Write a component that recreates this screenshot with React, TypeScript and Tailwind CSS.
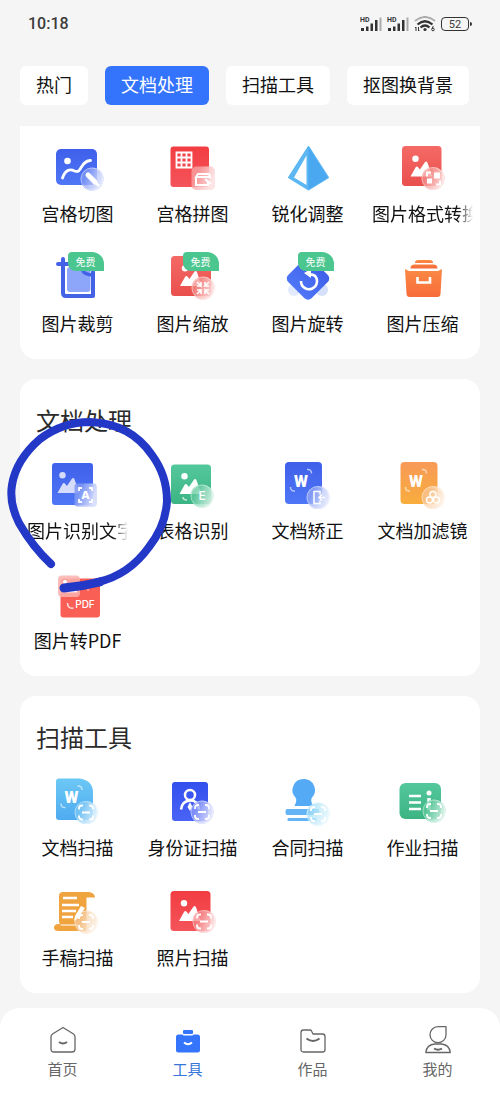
import { useState } from "react";
import type { ReactNode } from "react";
import clsx from "clsx";

type Tool = { name: string; icon: ReactNode; free?: boolean; long?: boolean };

const tabs = ["热门", "文档处理", "扫描工具", "抠图换背景"];

const gradients: [string, string, string][] = [
  ["blue", "#3f60ea", "#4f76f6"],
  ["indigo", "#3350ee", "#4a63f6"],
  ["red", "#f23d42", "#f4545a"],
  ["coral", "#f56a66", "#e94f4d"],
  ["sky", "#6cc8f5", "#4fabf0"],
  ["green", "#54c89d", "#3cb482"],
  ["amber", "#f79a58", "#f9ad3c"],
  ["orange", "#fb8a45", "#f76c3a"],
];

function Gradients() {
  return (
    <svg className="absolute h-0 w-0" aria-hidden="true">
      <defs>
        {gradients.map(([id, from, to]) => (
          <linearGradient key={id} id={id} x1="0" y1="0" x2="0" y2="1">
            <stop offset="0" stopColor={from} />
            <stop offset="1" stopColor={to} />
          </linearGradient>
        ))}
        <linearGradient id="sheen" x1="0" y1="0" x2="1" y2="0.4">
          <stop offset="0.3" stopColor="#fff" stopOpacity="0" />
          <stop offset="1" stopColor="#fff" stopOpacity="0.65" />
        </linearGradient>
      </defs>
    </svg>
  );
}

function Art({ children }: { children: ReactNode }) {
  return (
    <svg viewBox="0 0 56 56" className="size-14" fill="none" aria-hidden="true">
      {children}
    </svg>
  );
}

// frosted round badge in the lower right corner of most icons
function Glass({ x, y, tint, children }: { x: number; y: number; tint: string; children?: ReactNode }) {
  return (
    <g transform={`translate(${x} ${y})`}>
      <circle r="11.5" fill={tint} fillOpacity="0.75" />
      <circle r="11.5" fill="url(#sheen)" />
      <circle r="11" stroke="#fff" strokeOpacity="0.4" />
      {children}
    </g>
  );
}

function ScanMark() {
  return (
    <path
      d="M-7-3v-1q0-3 3-3h1M3-7h1q3 0 3 3v1M7 3v1q0 3-3 3h-1M-3 7h-1q-3 0-3-3v-1M-4 0h8"
      stroke="#fff"
      strokeWidth="1.8"
    />
  );
}

function Mountains({ x, y, fill = "#fff" }: { x: number; y: number; fill?: string }) {
  return (
    <g transform={`translate(${x} ${y})`} fill={fill}>
      <circle cx="5.5" cy="3.2" r="3.2" />
      <path d="M.5 21 5.5 12q1.2-2 2.6-.3l1.8 2.3 5-7.2q1.2-1.6 2.4 0L22 20q.3 1-.7 1z" />
    </g>
  );
}

function WordMark({ x, y }: { x: number; y: number }) {
  return (
    <g transform={`translate(${x} ${y})`}>
      <text
        textAnchor="middle"
        y="6"
        fontSize="16"
        fontWeight="900"
        fill="#fff"
        fontFamily="Roboto, sans-serif"
      >
        W
      </text>
      <path d="M6-11q4.500-.5 4.500 4M-10.500 6.500q0 4.500 4.500 4" stroke="#fff" strokeOpacity="0.6" strokeWidth="1.5" />
    </g>
  );
}

const slice = (
  <Art>
    <rect x="6" y="7" width="41" height="36" rx="5" fill="url(#blue)" />
    <circle cx="17.5" cy="19" r="3.3" fill="#fff" />
    <path d="M12.500 36c3-9 8-9 12-7 8 3 5-10 16-10.500" stroke="#fff" strokeWidth="2.8" strokeLinecap="round" />
    <Glass x={42} y={37} tint="#8098f5">
      <path d="M-4-4l7 7" stroke="#fff" strokeWidth="5" strokeLinecap="round" />
      <path d="M3 3l4 4" stroke="#fff" strokeWidth="2.5" />
    </Glass>
  </Art>
);

const collage = (
  <Art>
    <rect x="5.500" y="4.500" width="38.500" height="40.500" rx="3" fill="url(#red)" />
    <path
      d="M11.500 10.500h15v15h-15zM16.500 10.500v15M21.500 10.500v15M11.500 15.500h15M11.500 20.500h15"
      stroke="#fff"
      strokeWidth="1.8"
    />
    <rect x="26.500" y="24.500" width="23.500" height="23.500" rx="5" fill="#f8a3a5" fillOpacity="0.8" />
    <rect x="26.500" y="24.500" width="23.500" height="23.500" rx="5" fill="url(#sheen)" />
    <path d="M31 35v8h12v-3M31 35l2-3h11l1 3zM40 37l6 5" stroke="#fff" strokeWidth="2" />
  </Art>
);

const sharpen = (
  <Art>
    <path
      d="M28.500 5 48 35.500 28.500 47.500 9 35.500z"
      fill="#5db7f2"
      stroke="#5db7f2"
      strokeWidth="2"
      strokeLinejoin="round"
    />
    <path d="M28.500 5 48 35.500 28.500 47.500z" fill="#4aa8f0" />
    <path d="M26.500 13.500v29.500l-12.500-7.500z" fill="#fff" />
  </Art>
);

const convert = (
  <Art>
    <rect x="7" y="4" width="39.500" height="40" rx="3.5" fill="url(#coral)" />
    <Mountains x={15} y={13.5} />
    <Glass x={38} y={36.5} tint="#f48d8b">
      <path d="M1-6h6v6h-6zM-6 0h5v5h-5z" fill="#fff" />
      <path d="M-6-2v-4h4M7 2v4h-4" stroke="#fff" strokeWidth="2" />
    </Glass>
  </Art>
);

const crop = (
  <Art>
    <rect x="17" y="15" width="23.500" height="25" rx="3" fill="#8ea6fa" />
    <path
      d="M13 7v34q0 3 3 3h27v-24M8 12h11"
      stroke="#4362e6"
      strokeWidth="4"
      strokeLinecap="round"
      strokeLinejoin="round"
    />
    <path d="M32 17q2 6 11 6" stroke="#4362e6" strokeWidth="3.5" strokeLinecap="round" />
  </Art>
);

const scale = (
  <Art>
    <rect x="6" y="4" width="40" height="40" rx="3.5" fill="url(#coral)" />
    <Mountains x={14.5} y={13} />
    <Glass x={38} y={36} tint="#f48d8b">
      <path
        d="M-6-6l4 4v-4M6-6l-4 4h4M-6 6l4-4h-4M6 6l-4-4v4M-2-2h-4M2-2v-4M-2 2v4M2 2h4"
        stroke="#fff"
        strokeWidth="1.6"
      />
    </Glass>
  </Art>
);

const rotate = (
  <Art>
    <circle cx="14" cy="38" r="6" fill="#e3eafe" />
    <circle cx="42" cy="38" r="6" fill="#d5e0fd" />
    <rect x="11.500" y="10" width="33" height="33" rx="5" transform="rotate(45 28 26.500)" fill="url(#blue)" />
    <path d="M34 23a8 8 0 1 1-13 6" stroke="#fff" strokeWidth="2.6" />
    <path d="M29 23q3-1 5.500.5" stroke="#fff" strokeWidth="2.6" />
    <path d="M31 17l-7 4 7 5z" fill="#fff" />
  </Art>
);

const compress = (
  <Art>
    <path d="M20 11q0-3 3-3h12q3 0 3 3zM15.500 16.500q0-4 4-4h19q4 0 4 4z" fill="url(#orange)" />
    <path d="M10 17l4 2h29l4-2-1.500 25q-.3 3-3 3h-28q-2.700 0-3-3z" fill="url(#orange)" />
    <path d="M22.500 25v5.500h12.500v-5.500" stroke="#fff" strokeWidth="2.6" />
  </Art>
);

const imageText = (
  <Art>
    <rect x="2" y="4" width="41" height="42" rx="3" fill="url(#blue)" />
    <Mountains x={7} y={13} fill="#d5dcfb" />
    <rect x="24.500" y="24.500" width="22" height="23" rx="3" fill="#8098f5" fillOpacity="0.85" />
    <rect x="24.500" y="24.500" width="22" height="23" rx="3" fill="url(#sheen)" />
    <path d="M32 29h-3v3M39 29h3v3M32 43h-3v-3M39 43h3v-3" stroke="#fff" strokeWidth="1.8" />
    <text
      x="35.500"
      y="40"
      textAnchor="middle"
      fontSize="11"
      fontWeight="800"
      fill="#fff"
      fontFamily="Inter, sans-serif"
    >
      A
    </text>
  </Art>
);

const tableText = (
  <Art>
    <rect x="6" y="5.500" width="40" height="39.500" rx="3.5" fill="url(#green)" />
    <Mountains x={14} y={14} />
    <path d="M18 38q0 3 4 3" stroke="#fff" strokeOpacity="0.7" strokeWidth="1.5" />
    <Glass x={37} y={37} tint="#62c99f">
      <text y="4" textAnchor="middle" fontSize="12" fontWeight="500" fill="#fff" fontFamily="Inter, sans-serif">
        E
      </text>
    </Glass>
  </Art>
);

const straighten = (
  <Art>
    <rect x="5" y="3" width="37" height="42" rx="4" fill="url(#blue)" />
    <WordMark x={21} y={21.5} />
    <Glass x={38} y={38.5} tint="#93a8f6">
      <path d="M2-3v-3h-6v12h6v-3M7 0h-6M4-3l-3 3 3 3" stroke="#fff" strokeWidth="1.5" />
    </Glass>
  </Art>
);

const filter = (
  <Art>
    <rect x="5.500" y="3" width="37" height="42" rx="4" fill="url(#amber)" />
    <WordMark x={21} y={21.5} />
    <Glass x={38} y={38.5} tint="#fac596">
      <circle cy="-3" r="3" stroke="#fff" strokeWidth="1.4" />
      <circle cx="-3.5" cy="2.5" r="3" stroke="#fff" strokeWidth="1.4" />
      <circle cx="3.5" cy="2.5" r="3" stroke="#fff" strokeWidth="1.4" />
    </Glass>
  </Art>
);

const pdf = (
  <Art>
    <rect x="10.500" y="9.500" width="39.500" height="39" rx="3" fill="#fa5f56" />
    <rect x="8" y="6.500" width="22" height="21.500" rx="4" fill="#fbb3af" fillOpacity="0.85" />
    <circle cx="15" cy="13" r="2" fill="#fff" />
    <path d="M13 23l4-5 3 3 3-4 4 6zM38 19v3" fill="#fff" stroke="#fff" strokeOpacity="0.7" />
    <path d="M17.500 34q0 6 6 5" stroke="#fff" strokeOpacity="0.8" strokeWidth="1.5" />
    <text
      x="35"
      y="39"
      textAnchor="middle"
      fontSize="10"
      fontWeight="500"
      fill="#fff"
      fontFamily="Inter, sans-serif"
    >
      PDF
    </text>
  </Art>
);

const docScan = (
  <Art>
    <path
      d="M9 2.500h21q13 2 13 14v24.500q0 3-3 3h-31q-3 0-3-3v-35.500q0-3 3-3z"
      fill="url(#sky)"
    />
    <WordMark x={21.5} y={21} />
    <Glass x={36} y={36.5} tint="#7ac6f4">
      <ScanMark />
    </Glass>
  </Art>
);

const idScan = (
  <Art>
    <rect x="7" y="6" width="36" height="39" rx="3" fill="url(#indigo)" />
    <circle cx="25" cy="19" r="5" stroke="#fff" strokeWidth="2.5" />
    <path d="M16 33.500q1-8.500 9-9t9 9" stroke="#fff" strokeWidth="2.5" />
    <path d="M25 26l2.500 5-2.500 4-2.500-4z" fill="#fff" />
    <Glass x={37} y={36} tint="#8e9cf8">
      <ScanMark />
    </Glass>
  </Art>
);

const contractScan = (
  <Art>
    <path
      d="M24 3a11 11 0 0 1 8 18.500q-2 2.500 1 8.500h-18.500q3-6 1-8.500a11 11 0 0 1 8.500-18.500z"
      fill="#55aaf6"
    />
    <rect x="5.500" y="33" width="34" height="6" rx="2" fill="#62b4f6" />
    <rect x="7.500" y="42" width="29" height="3" rx="1" fill="#62b4f6" />
    <Glass x={38} y={38} tint="#a5e0f7">
      <ScanMark />
    </Glass>
  </Art>
);

const homeworkScan = (
  <Art>
    <rect x="4.500" y="7" width="41.500" height="36" rx="6" fill="url(#green)" />
    <path d="M14 20h12M14 26.500h12M14 33h12" stroke="#fff" strokeWidth="2.6" />
    <circle cx="34" cy="17" r="2.5" fill="#fff" />
    <path d="M34 22v12" stroke="#fff" strokeWidth="3.5" />
    <Glass x={39} y={35} tint="#5fc99e">
      <ScanMark />
    </Glass>
  </Art>
);

const manuscriptScan = (
  <Art>
    <path
      d="M13 6h26q6 1 6 5.500h-8.500v33.500h-28q-4.500 0-4.500-3.500t4.500-3.500h1.500q-1-1-1-3v-25q0-4 4-4z"
      fill="#f0a440"
    />
    <path d="M13 12h14M12 19h17M12 25h14M12 31h11" stroke="#fff" strokeWidth="2.7" />
    <path d="M10.500 39h18" stroke="#fff" />
    <Glass x={36} y={36} tint="#f6c795">
      <ScanMark />
    </Glass>
    <path d="M24 35l1-5 6-10 4 2-7 10z" fill="#fff" />
  </Art>
);

const photoScan = (
  <Art>
    <rect x="5.500" y="5" width="40" height="40" rx="3.5" fill="url(#red)" />
    <Mountains x={13.5} y={14} />
    <Glass x={39} y={35.5} tint="#f58587">
      <ScanMark />
    </Glass>
  </Art>
);

const imageTools: Tool[] = [
  { name: "宫格切图", icon: slice },
  { name: "宫格拼图", icon: collage },
  { name: "锐化调整", icon: sharpen },
  { name: "图片格式转换", icon: convert, long: true },
  { name: "图片裁剪", icon: crop, free: true },
  { name: "图片缩放", icon: scale, free: true },
  { name: "图片旋转", icon: rotate, free: true },
  { name: "图片压缩", icon: compress },
];

const docTools: Tool[] = [
  { name: "图片识别文字", icon: imageText, long: true },
  { name: "表格识别", icon: tableText },
  { name: "文档矫正", icon: straighten },
  { name: "文档加滤镜", icon: filter },
  { name: "图片转PDF", icon: pdf },
];

const scanTools: Tool[] = [
  { name: "文档扫描", icon: docScan },
  { name: "身份证扫描", icon: idScan },
  { name: "合同扫描", icon: contractScan },
  { name: "作业扫描", icon: homeworkScan },
  { name: "手稿扫描", icon: manuscriptScan },
  { name: "照片扫描", icon: photoScan },
];

function ToolGrid({ tools }: { tools: Tool[] }) {
  return (
    <div className="grid grid-cols-4 gap-y-[27px]">
      {tools.map((tool) => (
        <button key={tool.name} type="button" className="flex min-w-0 flex-col items-center gap-[3px] px-[7px]">
          <span className="relative block">
            {tool.icon}
            {tool.free && (
              <span className="absolute top-0 left-[18px] rounded-tl-sm rounded-tr-xl rounded-bl-lg bg-[#4cc68f] px-2 text-[10px] leading-[19px] whitespace-nowrap text-white">
                免费
              </span>
            )}
          </span>
          <span
            className={clsx(
              "block max-w-full overflow-hidden text-lg leading-6 whitespace-nowrap text-[#111]",
              // names wider than their column fade out instead of wrapping
              tool.long && "mask-r-from-85% mask-r-to-100%",
            )}
          >
            {tool.name}
          </span>
        </button>
      ))}
    </div>
  );
}

function Section({ title, tools, children }: { title: string; tools: Tool[]; children?: ReactNode }) {
  return (
    <section className="relative rounded-2xl bg-white pt-[25px] pb-6">
      <h2 className="mb-[23px] px-4 text-2xl leading-8 text-[#2b2b2b]">{title}</h2>
      <ToolGrid tools={tools} />
      {children}
    </section>
  );
}

function HandCircle() {
  return (
    <svg
      viewBox="0 0 180 230"
      className="pointer-events-none absolute top-0 -left-5 h-[230px] w-[180px]"
      fill="none"
      stroke="#2438c8"
      strokeLinecap="round"
      aria-hidden="true"
    >
      <path
        d="M51 185C36 171 27 158 19 144C12 130 10 118 12 106C15 87 25 73 40 60C56 48 72 43 90 43C115 44 137 54 152 76C163 91 167 106 167 122C166 140 160 154 149 168C136 186 120 198 98 203"
        strokeWidth="8"
      />
      <path d="M100 203C88 206 76 208 64 209" strokeWidth="9" />
    </svg>
  );
}

function Signal() {
  return (
    <svg viewBox="0 0 22 16" className="h-4 w-[22px]" aria-hidden="true">
      <text x="0" y="6" fontSize="7" fontWeight="700" fill="#333" fontFamily="Roboto, sans-serif">
        HD
      </text>
      <path
        d="M1 12h3v3h-3zM6 10.500h2.500v4.500h-2.500zM10.500 7.500h2.500v7.500h-2.500zM15 4h2.500v11h-2.500z"
        fill="#333"
      />
      <path d="M19.500 1.500h2v13.500h-2z" fill="#aaa" />
    </svg>
  );
}

function StatusBar() {
  return (
    <header className="flex h-12 items-center justify-between px-7 font-['Roboto','Noto_Sans_CJK_SC',sans-serif] text-[#3c3c3c]">
      <time className="text-base font-medium">10:18</time>
      <div className="flex items-center gap-[5px]">
        <Signal />
        <Signal />
        <svg viewBox="0 0 22 16" className="h-4 w-[22px]" fill="none" stroke="#333" aria-hidden="true">
          <path d="M1 5q10-8 20 0" stroke="#aaa" strokeWidth="2" />
          <path d="M3.500 8.500q7.500-6.500 15 0M6.500 11.500q4.500-4 9 0" strokeWidth="2.2" />
          <circle cx="11" cy="13.500" r="1.6" fill="#333" stroke="none" />
          <path d="M2 15v-4l-1 1M4.500 11v4l1-1" />
          <circle cx="19" cy="13.500" r="1.3" />
          <path d="M18 13l1.300-3" />
        </svg>
        <div className="flex items-center">
          <span className="flex h-[14px] w-7 items-center justify-center rounded-[4px] border border-[#333] text-[11px] leading-none">
            52
          </span>
          <span className="ml-px h-1 w-[2px] rounded-r-sm bg-[#333]" />
        </div>
      </div>
    </header>
  );
}

const navItems: { name: string; icon: ReactNode }[] = [
  {
    name: "首页",
    icon: (
      <>
        <path d="M13 1.500 23.500 8q1.500 1 1.500 3v12q0 3-3 3h-18q-3 0-3-3v-12q0-2 1.500-3z" />
        <path d="M9 16q4 3 8 0" strokeWidth="2" />
      </>
    ),
  },
  {
    name: "工具",
    icon: (
      <>
        <rect x="8" y="4" width="10" height="4" rx="1" fill="#3575fb" stroke="none" />
        <path
          d="M3.500 8.500h4q.5 1 1.500 1h8q1 0 1.500-1h4q2.500 0 2.500 2.500v13q0 2.500-2.500 2.500h-19q-2.500 0-2.500-2.500v-13q0-2.500 2.500-2.500z"
          fill="#3575fb"
          stroke="none"
        />
        <path d="M9 16.500q4 3.500 8 0" stroke="#fff" strokeWidth="2" />
      </>
    ),
  },
  {
    name: "作品",
    icon: (
      <>
        <path d="M3.500 4h6.500q1 0 1.500 1l1.500 3h9.500q2.500 0 2.500 2.500v13q0 2.500-2.500 2.500h-19q-2.500 0-2.500-2.500v-17q0-2.500 2.500-2.500z" />
        <path d="M6.500 12.500q6.500 5 13 0" strokeWidth="2" />
      </>
    ),
  },
  {
    name: "我的",
    icon: (
      <>
        <path d="M21 .7v8a8 8 0 1 1-8-8z" />
        <path d="M.8 26.500q1-8 9-8.500h6.500q8 .5 9 8.500z" />
        <path d="M9 22.500q4 2.500 8 0" strokeWidth="2" />
      </>
    ),
  },
];

export default function App() {
  const [tab, setTab] = useState("文档处理");
  const [page, setPage] = useState("工具");

  return (
    <div className="flex min-h-screen flex-col overflow-x-hidden bg-[#f5f5f5] font-['Noto_Sans_CJK_SC',sans-serif]">
      <Gradients />
      <StatusBar />

      <div className="mt-[18px] flex gap-[17px] px-5">
        {tabs.map((name) => (
          <button
            key={name}
            type="button"
            onClick={() => setTab(name)}
            className={clsx(
              "shrink-0 rounded-md px-4 pb-[2px] text-lg leading-[37px] whitespace-nowrap",
              tab === name ? "bg-[#3474fd] text-white" : "bg-white text-[#111]",
            )}
          >
            {name}
          </button>
        ))}
      </div>

      <main className="mt-[21px] flex flex-1 flex-col gap-5 px-5 pb-[15px]">
        {/* scrolled up under the tabs, so its heading and top corners are out of view */}
        <section className="rounded-b-2xl bg-white pt-4 pb-6">
          <ToolGrid tools={imageTools} />
        </section>
        <Section title="文档处理" tools={docTools}>
          <HandCircle />
        </Section>
        <Section title="扫描工具" tools={scanTools} />
      </main>

      <nav className="grid grid-cols-4 rounded-t-[20px] bg-white pt-[18px] pb-[19px]">
        {navItems.map((item) => (
          <button
            key={item.name}
            type="button"
            onClick={() => setPage(item.name)}
            className={clsx(
              "flex flex-col items-center gap-[3px] text-[15px] leading-6",
              page === item.name ? "text-[#3575d8]" : "text-[#666]",
            )}
          >
            <svg
              viewBox="0 0 26 28"
              className="h-7 w-[26px]"
              fill="none"
              stroke="currentColor"
              strokeWidth="1.3"
              strokeLinejoin="round"
              aria-hidden="true"
            >
              {item.icon}
            </svg>
            {item.name}
          </button>
        ))}
      </nav>
    </div>
  );
}
